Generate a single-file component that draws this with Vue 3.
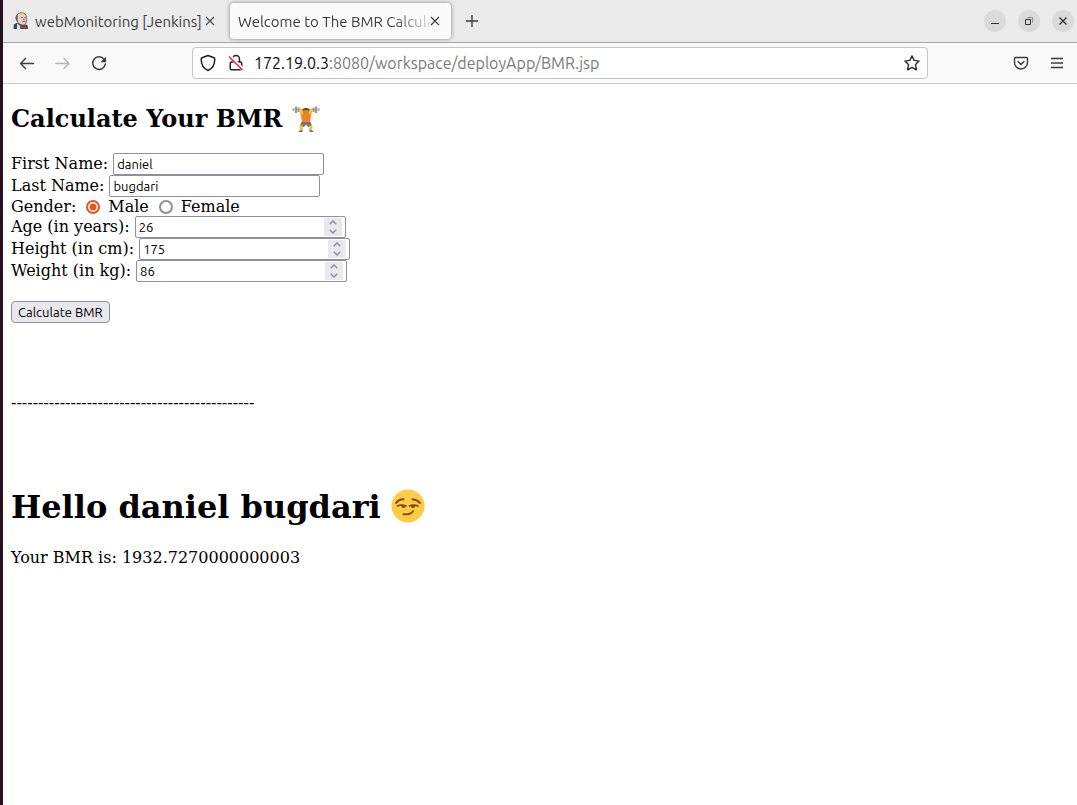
<script setup>
import { reactive, ref } from 'vue'

const form = reactive({ first: 'daniel', last: 'bugdari', gender: 'male', age: 26, height: 175, weight: 86 })
const address = ref('172.19.0.3:8080/workspace/deployApp/BMR.jsp')
const numbers = [
  { key: 'age', label: 'Age (in years):' },
  { key: 'height', label: 'Height (in cm):' },
  { key: 'weight', label: 'Weight (in kg):' }
]
const dashes = '-'.repeat(45)
</script>

<template>
  <div class="window">
    <header class="tabs">
      <div class="tab">
        <svg class="favicon" width="16" height="18" viewBox="0 0 16 18" aria-hidden="true">
          <path d="M.5 17l.3-4.500 3.700-2 6 2 4 .5.500 4z" fill="#2d4d63" />
          <path d="M3.500 3.500Q5 .700 8.500 .700q4.500 0 5 4.800l.2 3.500Q13.500 13 10 13.200 6.500 13 4.500 10 2 6 3.500 3.500z" fill="#ecd0bb" stroke="#5b504a" stroke-width=".7" />
          <path d="M4.500 2.500Q1.800 4 2.800 7.500l1.700 2.500.4-3.500z" fill="#6a615c" />
          <path d="M8 5.500h1.800M11.500 5.500h1.300M9 10q2-1.200 3.500 0M11 6.500v2" stroke="#6a5a50" stroke-width=".9" fill="none" />
          <path d="M4 11.500l4 3-1 2.500H4z" fill="#dfe5e6" />
          <path d="M7 13.500l3 1.200 3-1.200v3.200l-3-1-3 1z" fill="#c9353b" />
        </svg>
        <span class="tab-title">webMonitoring [Jenkins]</span>
        <button class="icon close" aria-label="Close webMonitoring tab">
          <svg width="10" height="10" viewBox="0 0 10 10"><path d="M1 1l8 8M9 1l-8 8" stroke="#4a4a4a" stroke-width="1.100" /></svg>
        </button>
      </div>
      <div class="tab active">
        <span class="tab-title fade">Welcome to The BMR Calculator</span>
        <button class="icon close" aria-label="Close BMR tab">
          <svg width="10" height="10" viewBox="0 0 10 10"><path d="M1 1l8 8M9 1l-8 8" stroke="#3a3a3a" stroke-width="1.100" /></svg>
        </button>
      </div>
      <button class="icon new-tab" aria-label="New tab">
        <svg width="14" height="14" viewBox="0 0 14 14"><path d="M7 1v12M1 7h12" stroke="#3c3c3c" stroke-width="1.400" /></svg>
      </button>
      <div class="controls">
        <button aria-label="Minimize"><svg width="22" height="22" viewBox="0 0 22 22"><path d="M7 13.500h8" stroke="#333" /></svg></button>
        <button aria-label="Restore"><svg width="22" height="22" viewBox="0 0 22 22" fill="none"><path d="M7.500 9.500h5v5h-5z" stroke="#333" /><path d="M9.500 7.500h5v5" stroke="#888" /></svg></button>
        <button aria-label="Close window"><svg width="22" height="22" viewBox="0 0 22 22"><path d="M7.500 7.500l7 7M14.500 7.500l-7 7" stroke="#333" stroke-width="1.400" /></svg></button>
      </div>
    </header>

    <nav class="toolbar">
      <div class="history">
        <button class="icon" aria-label="Back"><svg width="16" height="16" viewBox="0 0 16 16" fill="none" stroke="#3b3b3f" stroke-width="1.400" stroke-linecap="round" stroke-linejoin="round"><path d="M14.500 8.500H1.500M6.500 3.500l-5 5 5 5" /></svg></button>
        <button class="icon" aria-label="Forward" disabled><svg width="16" height="16" viewBox="0 0 16 16" fill="none" stroke="#b5b5b7" stroke-width="1.400" stroke-linecap="round" stroke-linejoin="round"><path d="M1 8.500h13M9 3.500l5 5-5 5" /></svg></button>
        <button class="icon" aria-label="Reload"><svg width="16" height="16" viewBox="0 0 16 16" fill="none"><path d="M13 4.200A6.300 6.300 0 1 0 14.300 9" stroke="#3b3b3f" stroke-width="1.500" stroke-linecap="round" /><path d="M15 1.800v5.500H9.500z" fill="#3b3b3f" /></svg></button>
      </div>
      <div class="url">
        <svg width="16" height="18" viewBox="0 0 16 18" fill="none" aria-hidden="true"><path d="M8 1.500l6 2.300q.8.300.8 1.200C14.800 10.500 12.500 14.500 8 16.500 3.500 14.500 1.200 10.500 1.200 5q0-.9.8-1.200z" stroke="#222226" stroke-width="1.500" stroke-linejoin="round" /></svg>
        <svg class="lock" width="16" height="18" viewBox="0 0 16 18" fill="none" aria-hidden="true">
          <path d="M4.500 8V5a3.500 3.500 0 0 1 7 0v3M3.500 8h9q1.200 0 1.200 1.200v5.300q0 1.200-1.200 1.200h-9q-1.200 0-1.200-1.200V9.200Q2.300 8 3.500 8z" stroke="#222226" stroke-width="1.500" />
          <path d="M1 1.500l14 14" stroke="#fff" stroke-width="3.500" /><path d="M1 2.500l13.500 13.500" stroke="#e22850" stroke-width="1.500" />
        </svg>
        <div class="address">
          <input v-model="address" aria-label="Address" />
          <div class="address-text" aria-hidden="true"><b>172.19.0.3</b>:8080/workspace/deployApp/BMR.jsp</div>
        </div>
        <button class="icon" aria-label="Bookmark"><svg width="16" height="16" viewBox="0 0 16 16" fill="none"><path d="M8 .9l2.100 4.500 5 .7-3.600 3.500.9 5.200L8 12.300l-4.400 2.500.9-5.200L.9 6.100l5-.7z" stroke="#29292d" stroke-width="1.400" stroke-linejoin="round" /></svg></button>
      </div>
      <div class="tools">
        <button class="icon" aria-label="Pocket"><svg width="16" height="16" viewBox="0 0 16 16" fill="none" stroke="#3b3b3f" stroke-width="1.400" stroke-linecap="round" stroke-linejoin="round"><path d="M2.500 2.500h11q1 0 1 1V7.500a6.500 6.500 0 0 1-13 0v-4q0-1 1-1zM5 6.500l3 3 3-3" /></svg></button>
        <button class="icon" aria-label="Menu"><svg width="16" height="16" viewBox="0 0 16 16"><path d="M2 3.500h12M2 8h12M2 12.500h12" stroke="#3b3b3f" stroke-width="1.300" /></svg></button>
      </div>
    </nav>

    <main>
      <h2>
        <span>Calculate Your BMR</span>
        <svg width="28" height="28" viewBox="0 0 28 28" role="img" aria-label="Weight lifter">
          <path d="M3 4.500h22" stroke="#9a9a9a" stroke-width="1.200" />
          <path d="M1.500 3v3M26.500 3v3" stroke="#aaa" stroke-width="2" /><path d="M4 1.500v6.500M6.500 2.500v4.500M24 1.500v6.500M21.500 2.500v4.500" stroke="#959595" stroke-width="2" />
          <path d="M8.500 5l2 6M19.500 5l-2 6" stroke="#fbc02d" stroke-width="2.800" stroke-linecap="round" />
          <path d="M9 9.500q5-2 10 0l-1 9h-8z" fill="#f58220" />
          <circle cx="14" cy="7" r="3.200" fill="#d88a22" /><path d="M10.700 7Q10 3 14 3t3.300 4l-1.300-2h-4z" fill="#51433e" />
          <path d="M9.500 17h9l1.500 4-4 1-2-2.500L12 22l-4-1z" fill="#757575" />
          <path d="M9 20.500l.5 5M19 20.500l-.5 5" stroke="#fbc02d" stroke-width="3" />
          <path d="M6.500 27q0-2 4-2v2zM17.500 27v-2q4 0 4 2z" fill="#4b79b5" />
        </svg>
      </h2>

      <form @submit.prevent>
        <div class="row"><label for="first">First Name:</label><input id="first" v-model="form.first" class="field" type="text" /></div>
        <div class="row"><label for="last">Last Name:</label><input id="last" v-model="form.last" class="field" type="text" /></div>
        <div class="row gender" role="radiogroup" aria-label="Gender">
          <span>Gender:</span>
          <label><input v-model="form.gender" type="radio" name="gender" value="male" />Male</label>
          <label><input v-model="form.gender" type="radio" name="gender" value="female" />Female</label>
        </div>
        <div v-for="n in numbers" :key="n.key" class="row">
          <label :for="n.key">{{ n.label }}</label>
          <div class="field number">
            <input :id="n.key" v-model.number="form[n.key]" type="number" />
            <div class="spin">
              <button type="button" :aria-label="'Increase ' + n.key" @click="form[n.key]++"><svg width="8" height="5" viewBox="0 0 8 5"><path d="M.7 4.300L4 1l3.300 3.300" fill="none" stroke="#8f8f9d" stroke-width="1.500" /></svg></button>
              <button type="button" :aria-label="'Decrease ' + n.key" @click="form[n.key]--"><svg width="8" height="5" viewBox="0 0 8 5"><path d="M.7.700L4 4 7.300.7" fill="none" stroke="#8f8f9d" stroke-width="1.500" /></svg></button>
            </div>
          </div>
        </div>
        <button class="submit" type="submit">Calculate BMR</button>
      </form>

      <div class="dashes">{{ dashes }}</div>

      <h1>
        <span>Hello daniel bugdari</span>
        <svg width="34" height="34" viewBox="0 0 34 34" role="img" aria-label="Smirking face">
          <circle cx="17" cy="17" r="16.500" fill="#ffca45" />
          <g fill="none" stroke="#704c06" stroke-linecap="round">
            <path d="M5 14q3-4 7.500-3.800M21.500 10.200Q26 10.500 29 14" stroke-width="1.900" />
            <path d="M6.500 17q4-2 8.500 0M18.500 17q4-2 8.500 0" stroke-width="1.600" />
            <path d="M12.500 25.200q7 .8 9.500-3" stroke-width="1.900" />
          </g>
          <path d="M10 16h5q-.5 3-2.500 3T10 16zM19.500 16h5q-.5 3-2.500 3t-2.500-3z" fill="#704c06" />
        </svg>
      </h1>
      <p>Your BMR is: 1932.7270000000003</p>
    </main>
  </div>
</template>

<style>
body { margin: 0; background: #fff; }
</style>

<style scoped>
* { box-sizing: border-box; }
.window { min-height: 100vh; border-left: 3px solid #26101f; background: #fff; color: #000; font-family: "DejaVu Serif", serif; font-size: 16px; line-height: 19px; }
button { padding: 0; border: 0; background: none; font: inherit; color: inherit; }
svg { display: block; flex: none; }
.icon { display: grid; place-items: center; flex: none; }
.tabs { display: flex; align-items: center; height: 43px; background: #ebebeb; border-bottom: 1px solid #a4a4a4; font: 15px/20px Ubuntu, "Noto Sans", sans-serif; color: #3c3c3c; }
.tab { display: flex; align-items: center; width: 220px; height: 36px; margin-left: 3px; padding: 0 11px 0 7px; }
.favicon { margin-right: 6px; }
.tab-title { flex: 1; min-width: 0; padding-top: 1px; overflow: hidden; white-space: nowrap; }
.active { width: 221px; margin-left: 4px; padding-left: 8px; border-radius: 4px; background: #fbfbfb; box-shadow: 0 0 4px rgba(0, 0, 0, 0.45); }
.fade { mask-image: linear-gradient(to right, #000 80%, transparent 104%); }
.new-tab { width: 42px; height: 38px; }
.controls { display: flex; gap: 12px; margin-left: auto; padding-right: 3px; }
.controls button { border-radius: 50%; background: #dadada; }
.toolbar { display: flex; align-items: center; height: 41px; border-bottom: 1px solid #ccc; background: #f9f9fa; }
.history { display: flex; gap: 20px; padding-left: 16px; }
.url { display: flex; align-items: center; flex: 1; max-width: 736px; height: 32px; margin-left: 85px; padding: 0 7px; border: 1px solid #c5c5c8; border-radius: 4px; background: #fff; }
.lock { margin-left: 12px; }
.address { position: relative; flex: 1; height: 20px; margin-left: 10px; font: 16px/20px Ubuntu, "Noto Sans", sans-serif; }
.address input { width: 100%; height: 20px; padding: 0; border: 0; outline: 0; background: none; font: inherit; color: transparent; }
.address-text { position: absolute; inset: 0; overflow: hidden; white-space: nowrap; pointer-events: none; color: #7b7b7b; }
.address-text b { font-weight: 400; color: #0c0c0d; }
.tools { display: flex; gap: 20px; margin-left: auto; padding-right: 12px; }
main { padding: 20px 8px; }
h1, h2 { display: flex; align-items: center; margin: 0; }
h2 { gap: 9px; height: 29px; margin-bottom: 20px; font-size: 24px; line-height: 29px; }
.row { display: flex; align-items: center; gap: 5px; height: 22px; }
.row > label { padding-bottom: 2px; }
.field { width: 211px; height: 22px; padding: 0 3px; border: 1px solid #8f8f9d; border-radius: 2px; background: #fff; font: 13px/18px Ubuntu, "Noto Sans", sans-serif; color: #000; }
.number { display: flex; align-items: center; }
.number input { flex: 1; min-width: 0; height: 18px; padding: 0; border: 0; outline: 0; font: inherit; appearance: textfield; }
.number input::-webkit-inner-spin-button { appearance: none; margin: 0; }
.spin { display: flex; flex-direction: column; width: 18px; height: 18px; background: #e9e9ed; }
.spin button { display: grid; place-items: center; height: 9px; }
.gender { height: 19px; gap: 10px; }
.gender > label { display: flex; align-items: center; gap: 8px; padding: 0; }
.gender input { appearance: none; width: 14px; height: 14px; margin: 0; border: 2px solid #8f8f9d; border-radius: 50%; background: #fff; }
.gender input:checked { border-color: #e95420; background: radial-gradient(circle, #e95420 3px, #fff 4px); }
.submit { display: block; height: 22px; margin-top: 19px; padding: 0 6px; border: 1px solid #8f8f9d; border-radius: 4px; background: #e9e9ed; font: 13px/20px Ubuntu, "Noto Sans", sans-serif; }
.dashes { margin-top: 70px; }
h1 { gap: 10px; height: 38px; margin-top: 75px; font-size: 32px; line-height: 38px; }
h1 span { padding-top: 2px; }
p { margin: 23px 0 0; }
</style>
